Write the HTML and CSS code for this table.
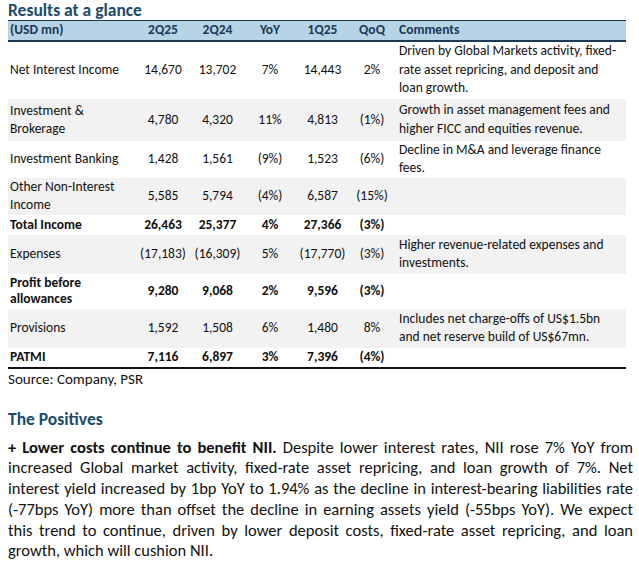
FILE: index.html
```html
<!DOCTYPE html>
<html>
<head>
<meta charset="utf-8">
<link rel="stylesheet" href="styles.css">
</head>
<body>
<h2 class="title">Results at a glance</h2>
<table class="results">
  <colgroup>
    <col class="c-label"><col class="c-num"><col class="c-num2"><col class="c-yoy"><col class="c-num3"><col class="c-qoq"><col class="c-comm">
  </colgroup>
  <thead>
    <tr>
      <th class="lbl">(USD mn)</th><th>2Q25</th><th>2Q24</th><th>YoY</th><th>1Q25</th><th>QoQ</th><th class="comm">Comments</th>
    </tr>
  </thead>
  <tbody>
    <tr class="r1">
      <td class="lbl">Net Interest Income</td><td>14,670</td><td>13,702</td><td>7%</td><td>14,443</td><td>2%</td>
      <td class="comm">Driven by Global Markets activity, fixed-<br>rate asset repricing, and deposit and<br>loan growth.</td>
    </tr>
    <tr class="r2 alt">
      <td class="lbl">Investment &amp;<br>Brokerage</td><td>4,780</td><td>4,320</td><td>11%</td><td>4,813</td><td>(1%)</td>
      <td class="comm">Growth in asset management fees and<br>higher FICC and equities revenue.</td>
    </tr>
    <tr class="r3">
      <td class="lbl">Investment Banking</td><td>1,428</td><td>1,561</td><td>(9%)</td><td>1,523</td><td>(6%)</td>
      <td class="comm">Decline in M&amp;A and leverage finance<br>fees.</td>
    </tr>
    <tr class="r4 alt">
      <td class="lbl">Other Non-Interest<br>Income</td><td>5,585</td><td>5,794</td><td>(4%)</td><td>6,587</td><td>(15%)</td>
      <td class="comm"></td>
    </tr>
    <tr class="r5 bold">
      <td class="lbl">Total Income</td><td>26,463</td><td>25,377</td><td>4%</td><td>27,366</td><td>(3%)</td>
      <td class="comm"></td>
    </tr>
    <tr class="r6 alt">
      <td class="lbl">Expenses</td><td>(17,183)</td><td>(16,309)</td><td>5%</td><td>(17,770)</td><td>(3%)</td>
      <td class="comm">Higher revenue-related expenses and<br>investments.</td>
    </tr>
    <tr class="r7 bold">
      <td class="lbl">Profit before<br>allowances</td><td>9,280</td><td>9,068</td><td>2%</td><td>9,596</td><td>(3%)</td>
      <td class="comm"></td>
    </tr>
    <tr class="r8 alt">
      <td class="lbl">Provisions</td><td>1,592</td><td>1,508</td><td>6%</td><td>1,480</td><td>8%</td>
      <td class="comm">Includes net charge-offs of US$1.5bn<br>and net reserve build of US$67mn.</td>
    </tr>
    <tr class="r9 bold last">
      <td class="lbl">PATMI</td><td>7,116</td><td>6,897</td><td>3%</td><td>7,396</td><td>(4%)</td>
      <td class="comm"></td>
    </tr>
  </tbody>
</table>
<p class="source">Source: Company, PSR</p>

<h2 class="section">The Positives</h2>
<p class="body">
  <span class="line"><b>+ Lower costs continue to benefit NII.</b> Despite lower interest rates, NII rose 7% YoY from</span>
  <span class="line">increased Global market activity, fixed-rate asset repricing, and loan growth of 7%. Net</span>
  <span class="line">interest yield increased by 1bp YoY to 1.94% as the decline in interest-bearing liabilities rate</span>
  <span class="line">(-77bps YoY) more than offset the decline in earning assets yield (-55bps YoY). We expect</span>
  <span class="line">this trend to continue, driven by lower deposit costs, fixed-rate asset repricing, and loan</span>
  <span class="line end">growth, which will cushion NII.</span>
</p>
</body>
</html>
```

FILE: styles.css
```css
html, body {
  background: #ffffff;
}
body {
  margin: 0 6px 0 8px;
  font-family: Carlito, Calibri, Lato, "Liberation Sans", sans-serif;
  color: #111111;
}
.title, .section {
  margin: 0;
  font-size: 17.5px;
  line-height: 20px;
  font-weight: bold;
  color: #1c4b6b;
}
.results {
  width: 618px;
  border-collapse: collapse;
  table-layout: fixed;
  font-size: 13.5px;
  line-height: 18px;
}
.c-label { width: 128px; }
.c-num { width: 54px; }
.c-num2 { width: 55px; }
.c-yoy { width: 50px; }
.c-num3 { width: 55px; }
.c-qoq { width: 44px; }
.c-comm { width: 232px; }

.results thead tr {
  background: #b7d4e6;
  border-top: 1px solid #1a3a58;
  border-bottom: 2px solid #1a3a58;
}
.results th {
  font-weight: bold;
  color: #183856;
  text-align: center;
  padding: 0;
  height: 17px;
  white-space: nowrap;
}
.results td {
  padding: 0;
  text-align: center;
  vertical-align: middle;
  white-space: nowrap;
}
.results .lbl {
  text-align: left;
  padding-left: 2px;
}
.results .comm {
  text-align: left;
  padding-left: 5px;
  line-height: 18.5px;
}
.alt { background: #f2f2f2; }
.bold td { font-weight: bold; }
.last { border-bottom: 2px solid #111111; }

.r1 { height: 58px; }
.r2 { height: 42px; }
.r3 { height: 37px; }
.r4 { height: 37px; }
.r5 { height: 20px; }
.r6 { height: 39px; }
.r7 { height: 35px; }
.r7 .lbl { line-height: 16px; }
.r8 { height: 39px; }
.r9 { height: 20px; }

.source {
  margin: 0;
  font-size: 15px;
  line-height: 20px;
}
.section {
  margin-top: 20px;
}
.body {
  margin: 8px 0 0 0;
  width: 625px;
  font-size: 16.5px;
  line-height: 20.8px;
}
.line {
  display: block;
  text-align: justify;
  text-align-last: justify;
  white-space: nowrap;
}
.line.end {
  text-align-last: left;
}
```
